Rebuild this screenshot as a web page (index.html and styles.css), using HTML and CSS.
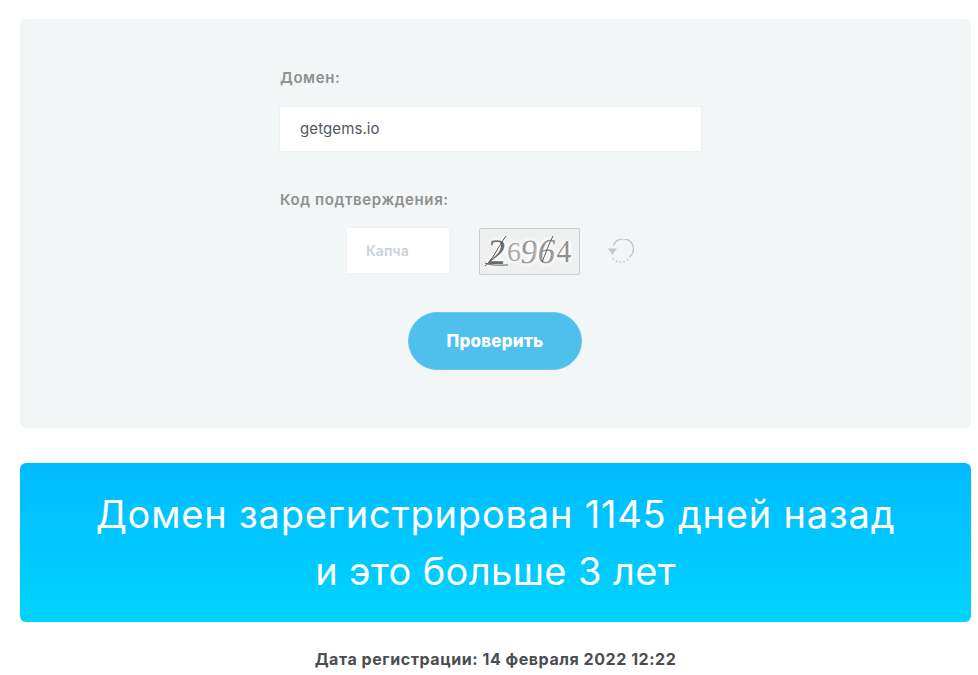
FILE: index.html
```html
<!DOCTYPE html>
<html lang="ru">
<head>
<meta charset="utf-8">
<title>Проверка домена</title>
<link rel="stylesheet" href="styles.css">
</head>
<body>
<main class="page">
  <form class="panel">
    <div class="fields">
      <label class="label label-domain" for="domain">Домен:</label>
      <input class="domain-input" id="domain" type="text" value="getgems.io">
      <label class="label label-code" for="code">Код подтверждения:</label>
      <div class="captcha-row">
        <input class="captcha-input" id="code" type="text" placeholder="Капча">
        <div class="captcha-image">
          <span class="digit d1">2</span><span class="digit d2">6</span><span class="digit d3">9</span><span class="digit d4">6</span><span class="digit d5">4</span>
          <svg class="captcha-noise" viewBox="0 0 99 44" width="99" height="44" aria-hidden="true">
            <path d="M5 34C12 37 20 36 28 36"/>
            <path d="M5 37C12 32 18 18 26 7"/>
            <path d="M62 33C66 24 69 14 73 7"/>
          </svg>
        </div>
        <svg class="refresh" viewBox="0 0 26 26" width="26" height="26" aria-hidden="true">
          <path class="refresh-solid" d="M5.6 6.6A10.2 10.2 0 1 1 22.4 17.2"/>
          <path class="refresh-dots" d="M22.4 17.2A10.2 10.2 0 0 1 4.2 18.2"/>
          <path class="refresh-head" d="M0 9.6h9L4.4 16z"/>
        </svg>
      </div>
    </div>
    <button class="submit" type="button">Проверить</button>
  </form>
  <section class="banner">
    <p>Домен зарегистрирован 1145 дней назад</p>
    <p class="banner-second">и это больше 3 лет</p>
  </section>
  <p class="date">Дата регистрации: 14 февраля 2022 12:22</p>
</main>
</body>
</html>
```
FILE: styles.css
```css
* { box-sizing: border-box; }
html, body { margin: 0; padding: 0; background: #fff; overflow: hidden; }
body { font-family: "Inter", "Noto Sans", "Liberation Sans", sans-serif; }
.page { width: 978px; height: 675px; padding: 19px 7px 0 20px; overflow: hidden; }
.panel {
  height: 409px;
  background: #f3f6f7;
  border-radius: 6px;
  padding-top: 50px;
  display: flex;
  flex-direction: column;
}
.fields { width: 423px; margin-left: 259px; }
.label {
  display: block;
  font-size: 15px;
  line-height: 18px;
  font-weight: 600;
  letter-spacing: 0.6px;
  color: #8f8f8d;
}
.label-domain { margin-left: 1px; }
.label-code { margin: 39px 0 0 1px; }
.domain-input {
  display: block;
  width: 423px;
  height: 46px;
  margin-top: 19px;
  border: 1px solid #eef0f1;
  border-radius: 2px;
  background: #fff;
  padding: 0 20px 2px;
  font: 400 15px "Inter", sans-serif;
  letter-spacing: 0.1px;
  color: #50565e;
  outline: none;
}
.captcha-row {
  display: flex;
  align-items: flex-start;
  margin-top: 18px;
  padding-left: 67px;
}
.captcha-input {
  width: 104px;
  height: 47px;
  border: 1px solid #eff1f2;
  border-radius: 2px;
  background: #fff;
  padding: 0 19px;
  font: 600 14px "Inter", sans-serif;
  outline: none;
}
.captcha-input::placeholder { color: #ccd2da; opacity: 1; }
.captcha-image {
  position: relative;
  width: 101px;
  height: 47px;
  margin: 1px 0 0 29px;
  border: 1px solid #c9cccd;
  border-radius: 2px;
  background: #eeefef;
  display: flex;
  align-items: center;
  justify-content: center;
  font: 400 36px/1 "Liberation Serif", serif;
  color: #6e6e6e;
}
.digit { display: block; text-shadow: 0 0 5px #fff, 0 0 5px #fff, 0 0 7px #fff, 0 0 7px #fff; }
.d1 { color: #6a6a6a; transform: skewX(-6deg); }
.d2 { color: #a6a6a6; font-size: 28px; margin-left: 1px; }
.d3 { color: #9a9a9a; font-size: 34px; transform: skewX(-6deg); }
.d4 { color: #969696; font-size: 35px; transform: skewX(-10deg); }
.d5 { color: #8f8f8f; font-size: 31px; transform: scaleX(0.95); }
.captcha-noise { position: absolute; left: 0; top: 0; }
.captcha-noise path { fill: none; stroke: #5c5c5c; stroke-width: 1; }
.refresh { flex: none; margin: 12px 0 0 28px; }
.refresh path { fill: none; stroke: #c3c9cb; stroke-width: 1.5; }
.refresh .refresh-dots { stroke-dasharray: 1.5 2.4; }
.refresh .refresh-head { fill: #c3c9cb; stroke: none; }
.submit {
  display: block;
  width: 174px;
  height: 58px;
  margin: 37px 0 0 388px;
  border: 1px solid #6cc8ec;
  border-radius: 29px;
  background: #4fc0ec;
  color: #fff;
  font: 800 17px "Inter", sans-serif;
  letter-spacing: 0.2px;
}
.banner {
  height: 159px;
  margin-top: 35px;
  border-radius: 6px;
  background: linear-gradient(180deg, #00bbff 0%, #00d3ff 100%);
  color: #fff;
  text-align: center;
  padding-top: 23px;
  font-size: 38px;
  font-weight: 400;
  letter-spacing: 0.8px;
  line-height: 57px;
}
.banner p { margin: 0; }
.banner .banner-second { letter-spacing: 0.4px; }
.date {
  margin: 26px 0 0;
  text-align: center;
  font-size: 16px;
  line-height: 22px;
  font-weight: 700;
  letter-spacing: 0.55px;
  color: #4a4d52;
}
```
